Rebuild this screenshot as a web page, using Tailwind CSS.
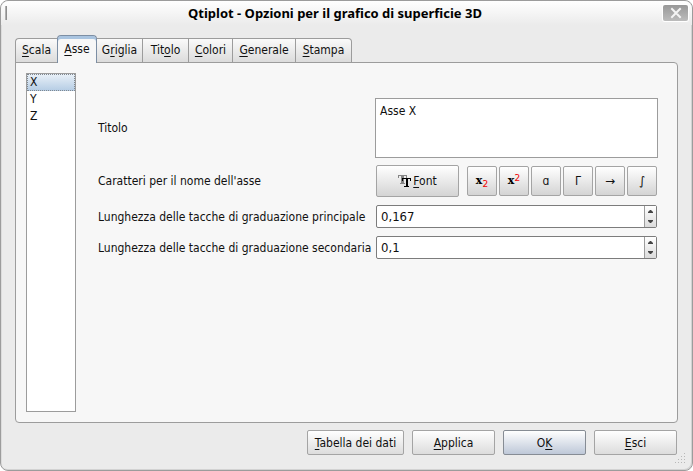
<!DOCTYPE html>
<html lang="it">
<head>
<meta charset="utf-8">
<meta name="viewport" content="width=device-width, initial-scale=1">
<title>Qtiplot - Opzioni per il grafico di superficie 3D</title>
<script src="https://cdn.jsdelivr.net/npm/@tailwindcss/browser@4"></script>
</head>
<body class="bg-white font-['DejaVu_Sans_Condensed','DejaVu_Sans',sans-serif] text-xs leading-4 text-[#101010]">
<div class="relative flex min-h-screen flex-col rounded-lg border border-[#9c9c9c] bg-[#ebebeb] shadow-[inset_-1px_-1px_0_#d2d2d2,inset_1px_1px_0_#dcdcdc]">
  <header class="flex h-6 items-center rounded-t-lg bg-linear-to-b from-white to-[#ebebeb] pr-1 pl-1">
    <span class="h-3.5 w-0.5 border-l border-[#b0b0b0] bg-[#8e8e8e]"></span>
    <h1 class="flex-1 text-center font-['Noto_Sans',sans-serif] text-[13px] leading-4 font-bold text-black">Qtiplot - Opzioni per il grafico di superficie 3D</h1>
    <button type="button" aria-label="Chiudi" class="flex h-4 w-[25px] items-center justify-center rounded-xs bg-linear-to-b from-[#989898] to-[#bcbcbc] shadow-[0_0_0_1px_#fff]">
      <svg width="12" height="12" viewBox="0 0 12 12" fill="none" stroke="#f4f4f4" stroke-width="2" stroke-linecap="square"><path d="M2 2 4 4M10 2 8 4M2 10l2-2M10 10 8 8M4 4l4 4M8 4 4 8"/></svg>
    </button>
  </header>

  <main class="flex flex-1 flex-col px-3.5 pt-2.5">
    <div role="tablist" class="relative z-10 -mb-px flex items-end">
      <button role="tab" type="button" class="h-[25px] w-[42px] rounded-tl-sm border border-r-0 border-[#9c9c9c] bg-linear-to-b from-[#fafafa] to-[#dcdcdc] pb-0.5"><u class="underline-offset-2">S</u>cala</button>
      <button role="tab" type="button" aria-selected="true" class="h-7 w-10 rounded-t-sm border border-b-0 border-[#7c8ea4] bg-[#f7f7f7] pb-0.5 shadow-[inset_0_3px_0_#a9c4e0]"><u class="underline-offset-2">A</u>sse</button>
      <button role="tab" type="button" class="h-[25px] w-[46px] border border-l-0 border-[#9c9c9c] bg-linear-to-b from-[#fafafa] to-[#dcdcdc] pb-0.5">G<u class="underline-offset-2">r</u>iglia</button>
      <button role="tab" type="button" class="h-[25px] w-[46px] border border-l-0 border-[#9c9c9c] bg-linear-to-b from-[#fafafa] to-[#dcdcdc] pb-0.5">Tit<u class="underline-offset-2">o</u>lo</button>
      <button role="tab" type="button" class="h-[25px] w-11 border border-l-0 border-[#9c9c9c] bg-linear-to-b from-[#fafafa] to-[#dcdcdc] pb-0.5"><u class="underline-offset-2">C</u>olori</button>
      <button role="tab" type="button" class="h-[25px] w-[63px] border border-l-0 border-[#9c9c9c] bg-linear-to-b from-[#fafafa] to-[#dcdcdc] pb-0.5"><u class="underline-offset-2">G</u>enerale</button>
      <button role="tab" type="button" class="h-[25px] w-14 rounded-tr-sm border border-l-0 border-[#9c9c9c] bg-linear-to-b from-[#fafafa] to-[#dcdcdc] pb-0.5"><u class="underline-offset-2">S</u>tampa</button>
    </div>

    <section role="tabpanel" class="flex flex-1 gap-[22px] rounded-b-sm rounded-tr-sm border border-[#9c9c9c] bg-[#f7f7f7] py-2.5 pr-[19px] pl-2.5">
      <select size="3" aria-label="Asse" class="w-[50px] appearance-none overflow-hidden border border-[#9c9c9c] bg-white outline-none">
        <option selected class="h-[17px] min-h-0 px-[3px] pt-px pb-0 leading-4 text-[#101010] outline-1 -outline-offset-1 outline-dotted outline-[#808890] checked:bg-linear-to-b checked:from-[#eaf1f8] checked:to-[#b4cce4]">X</option>
        <option class="h-[17px] min-h-0 px-[3px] pt-px pb-0 leading-4">Y</option>
        <option class="h-[17px] min-h-0 px-[3px] pt-px pb-0 leading-4">Z</option>
      </select>

      <form class="flex flex-1 flex-col gap-2 pt-[25px]">
        <div class="-mb-px flex items-center">
          <label for="title" class="w-[277px] shrink-0">Titolo</label>
          <textarea id="title" class="block h-[60px] min-w-0 flex-1 resize-none border border-[#9c9c9c] bg-white px-1 py-1 outline-none">Asse X</textarea>
        </div>
        <div class="flex items-center pr-px">
          <label for="font" class="w-[278px] shrink-0">Caratteri per il nome dell'asse</label>
          <button id="font" type="button" class="flex h-8 w-[83px] items-center justify-center gap-0.5 rounded-xs border border-[#a4a4a4] bg-linear-to-b from-white to-[#d4d4d4]">
            <svg width="13" height="12" viewBox="0 0 13 12" shape-rendering="crispEdges"><path fill="#858585" d="M0 0h9v3H8V1H6v7h1v1H2V8h1V1H1v2H0z"/><path fill="#000" d="M4 3h9v3h-1V4h-2v7h1v1H6v-1h2V4H5v2H4z"/></svg>
            <span><u class="underline-offset-2">F</u>ont</span>
          </button>
          <div class="ml-auto flex gap-0.5">
            <button type="button" aria-label="Pedice" class="flex size-[30px] items-center justify-center rounded-xs border border-[#a4a4a4] bg-linear-to-b from-white to-[#d4d4d4] font-['DejaVu_Serif',serif] text-[11px] font-bold text-black">x<span class="mt-1.5 font-['DejaVu_Sans',sans-serif] text-[9px] font-normal text-[#f00000]">2</span></button>
            <button type="button" aria-label="Apice" class="flex size-[30px] items-center justify-center rounded-xs border border-[#a4a4a4] bg-linear-to-b from-white to-[#d4d4d4] font-['DejaVu_Serif',serif] text-[11px] font-bold text-black">x<span class="mb-1.5 font-['DejaVu_Sans',sans-serif] text-[9px] font-normal text-[#f00000]">2</span></button>
            <button type="button" class="size-[30px] rounded-xs border border-[#a4a4a4] bg-linear-to-b from-white to-[#d4d4d4]">ɑ</button>
            <button type="button" class="size-[30px] rounded-xs border border-[#a4a4a4] bg-linear-to-b from-white to-[#d4d4d4]">Γ</button>
            <button type="button" class="size-[30px] rounded-xs border border-[#a4a4a4] bg-linear-to-b from-white to-[#d4d4d4] font-['DejaVu_Sans',sans-serif]">→</button>
            <button type="button" class="size-[30px] rounded-xs border border-[#a4a4a4] bg-linear-to-b from-white to-[#d4d4d4] font-['DejaVu_Sans',sans-serif]">∫</button>
          </div>
        </div>
        <div class="flex items-center pr-px">
          <label for="major" class="w-[278px] shrink-0 whitespace-nowrap">Lunghezza delle tacche di graduazione principale</label>
          <div class="flex h-[23px] min-w-0 flex-1 rounded-xs border border-[#7c7c7c] bg-white">
            <input id="major" type="text" value="0,167" class="min-w-0 flex-1 px-1 text-[13px] outline-none">
            <div class="flex w-3 flex-col border-l border-[#9c9c9c] bg-linear-to-b from-white to-[#dcdcdc]">
              <button type="button" aria-label="Aumenta" class="flex flex-1 items-center justify-center"><svg width="5" height="3" viewBox="0 0 5 3"><path d="M0 3V2L2 0h1l2 2v1z" fill="#444"/></svg></button>
              <button type="button" aria-label="Diminuisci" class="flex flex-1 items-center justify-center"><svg width="5" height="3" viewBox="0 0 5 3"><path d="M0 0v1l2 2h1l2-2V0z" fill="#444"/></svg></button>
            </div>
          </div>
        </div>
        <div class="flex items-center pr-px">
          <label for="minor" class="w-[278px] shrink-0 whitespace-nowrap">Lunghezza delle tacche di graduazione secondaria</label>
          <div class="flex h-[23px] min-w-0 flex-1 rounded-xs border border-[#7c7c7c] bg-white">
            <input id="minor" type="text" value="0,1" class="min-w-0 flex-1 px-1 text-[13px] outline-none">
            <div class="flex w-3 flex-col border-l border-[#9c9c9c] bg-linear-to-b from-white to-[#dcdcdc]">
              <button type="button" aria-label="Aumenta" class="flex flex-1 items-center justify-center"><svg width="5" height="3" viewBox="0 0 5 3"><path d="M0 3V2L2 0h1l2 2v1z" fill="#444"/></svg></button>
              <button type="button" aria-label="Diminuisci" class="flex flex-1 items-center justify-center"><svg width="5" height="3" viewBox="0 0 5 3"><path d="M0 0v1l2 2h1l2-2V0z" fill="#444"/></svg></button>
            </div>
          </div>
        </div>
      </form>
    </section>

    <footer class="flex justify-end gap-2 pt-[7px] pr-px pb-[15px]">
      <button type="button" class="h-[25px] w-[97px] rounded-xs border border-[#a4a4a4] bg-linear-to-b from-white to-[#dcdcdc]"><u class="underline-offset-2">T</u>abella dei dati</button>
      <button type="button" class="h-[25px] w-[83px] rounded-xs border border-[#a4a4a4] bg-linear-to-b from-white to-[#dcdcdc]"><u class="underline-offset-2">A</u>pplica</button>
      <button type="button" class="h-[25px] w-[83px] rounded-xs border border-[#868c94] bg-linear-to-b from-white to-[#bec8d8]">O<u class="underline-offset-2">K</u></button>
      <button type="button" class="h-[25px] w-[83px] rounded-xs border border-[#a4a4a4] bg-linear-to-b from-white to-[#dcdcdc]"><u class="underline-offset-2">E</u>sci</button>
    </footer>
  </main>
  <svg class="absolute right-1.5 bottom-1.5" width="11" height="11" viewBox="0 0 11 11" shape-rendering="crispEdges" fill="#b8b8b8"><path d="M9 0h1v1H9zM9 3h1v1H9zM6 3h1v1H6zM9 6h1v1H9zM6 6h1v1H6zM3 6h1v1H3zM9 9h1v1H9zM6 9h1v1H6zM3 9h1v1H3zM0 9h1v1H0z"/></svg>
</div>
</body>
</html>
